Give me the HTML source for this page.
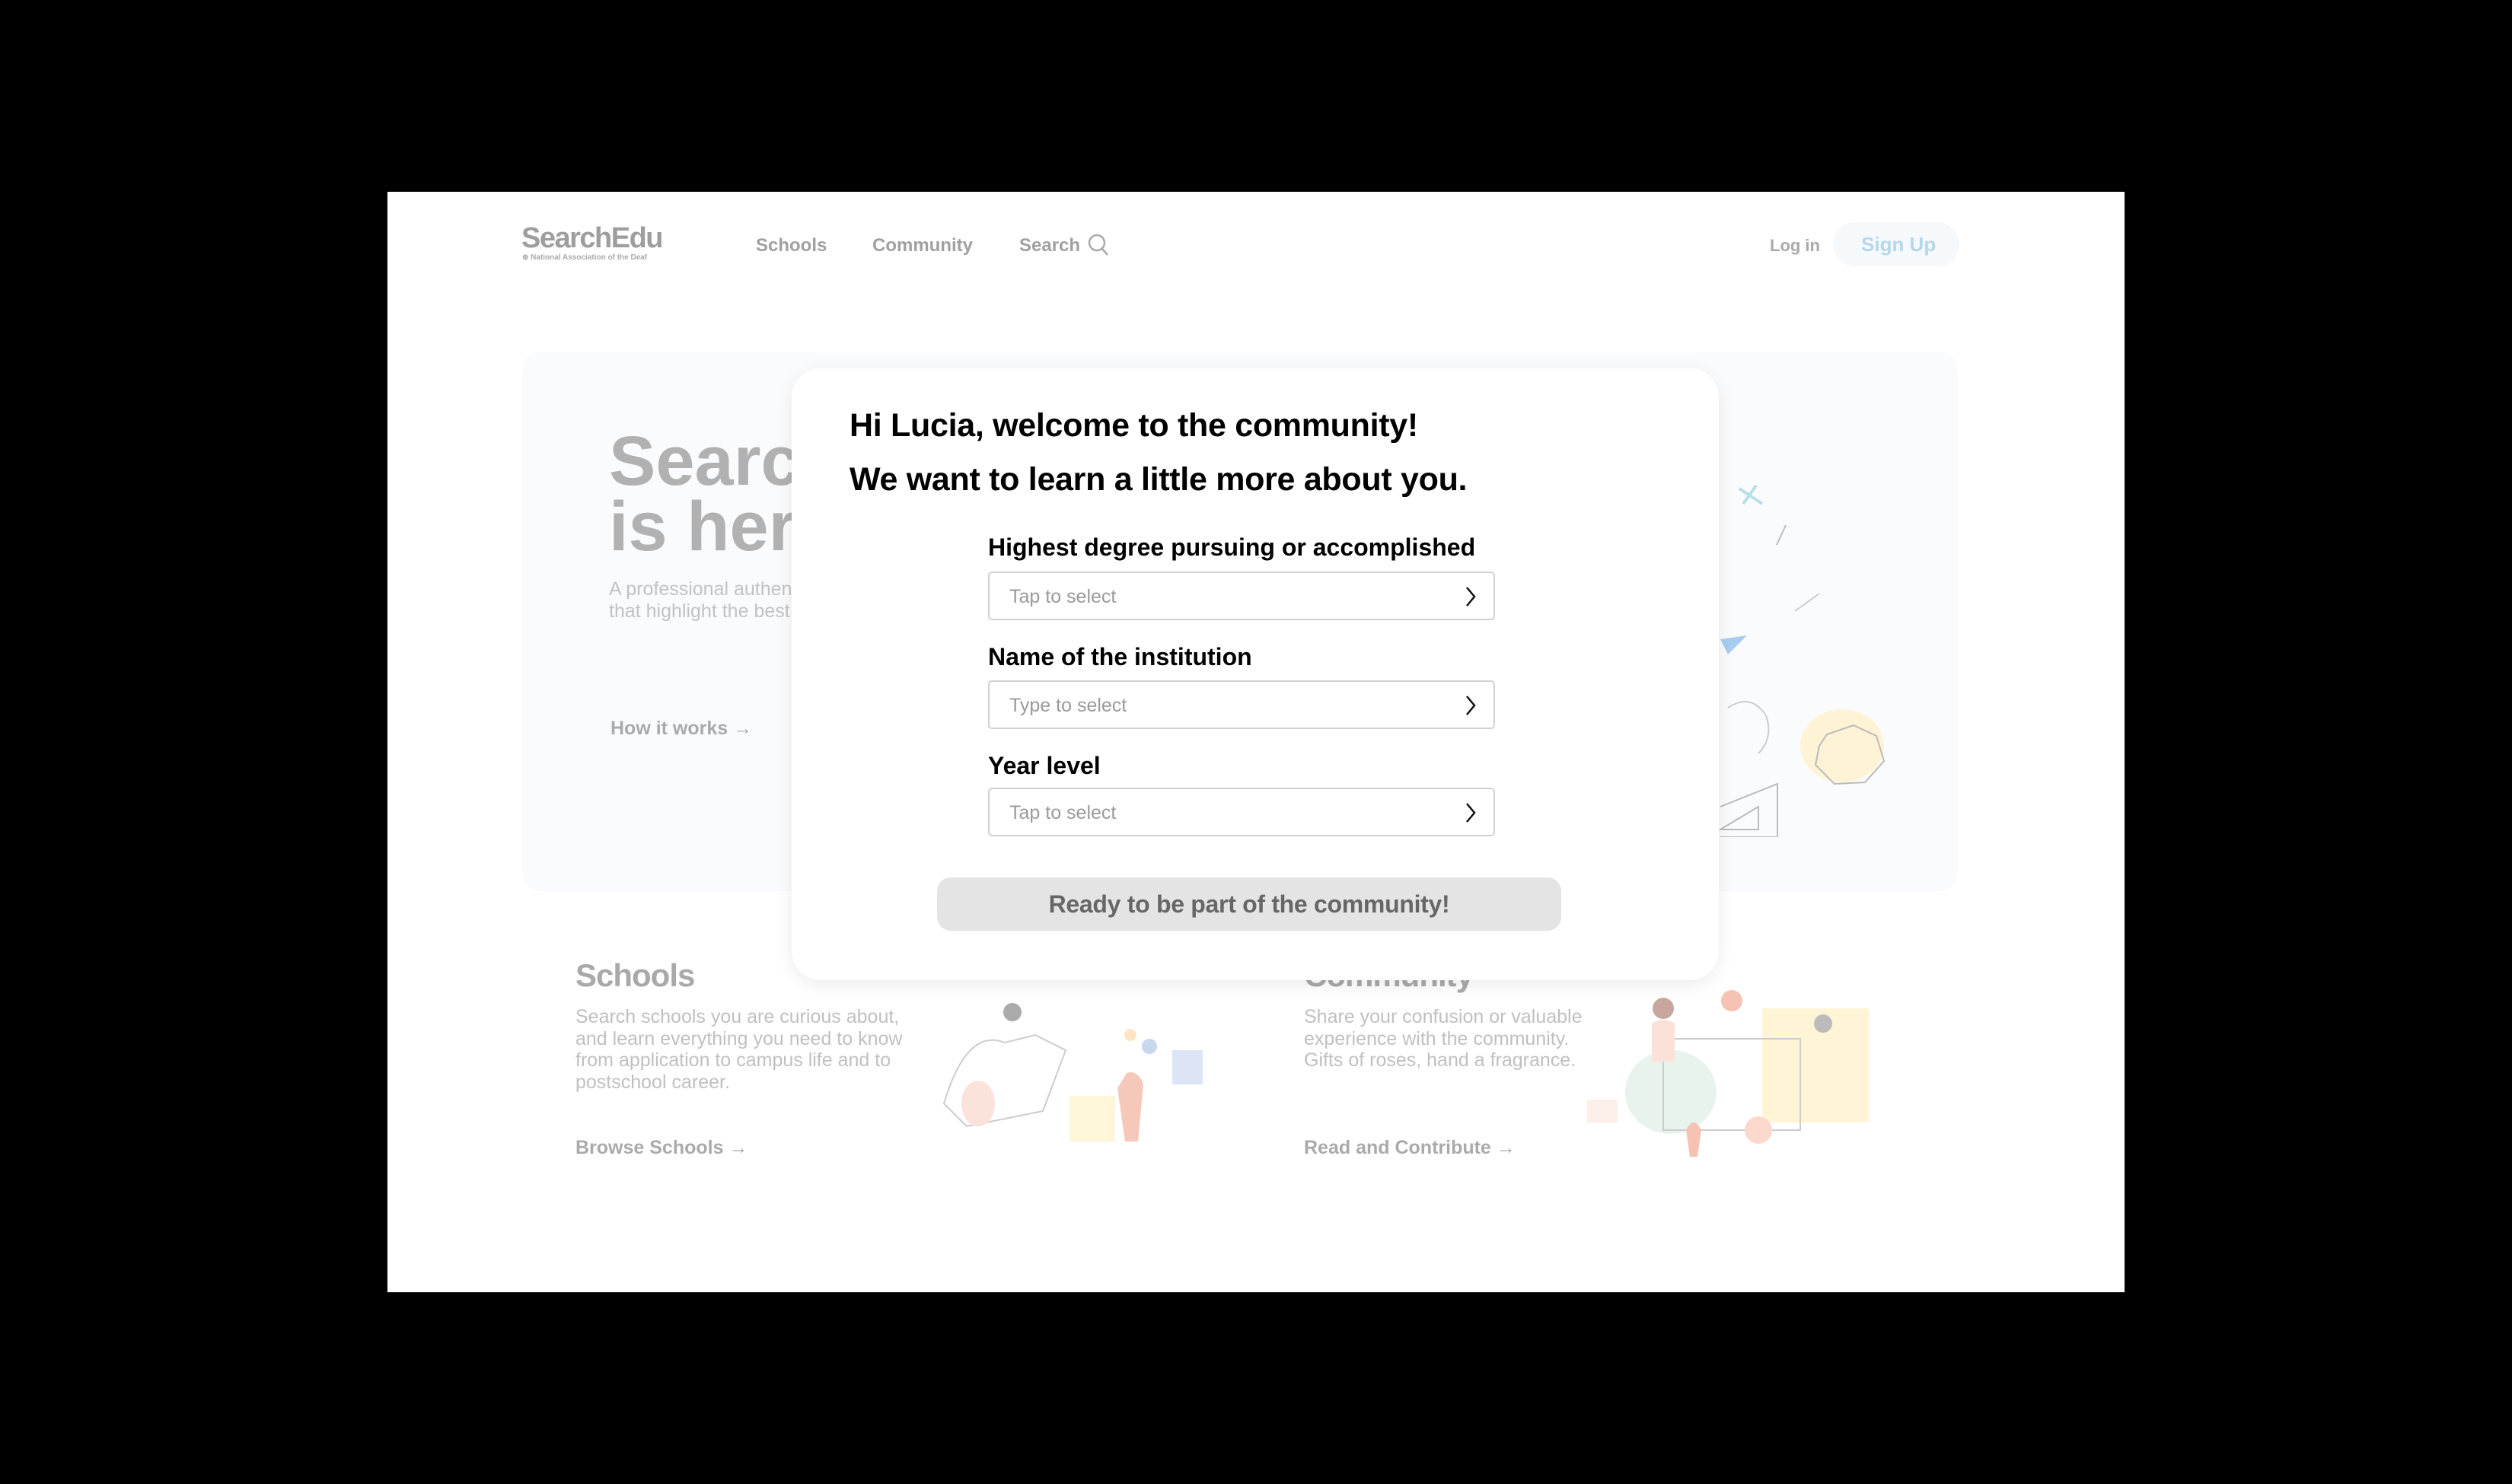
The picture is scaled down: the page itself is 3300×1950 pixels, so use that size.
<!DOCTYPE html>
<html><head><meta charset="utf-8"><style>
*{margin:0;padding:0;box-sizing:border-box}
body{width:3300px;height:1950px;background:#000;position:relative;overflow:hidden;font-family:"Liberation Sans",Arial,sans-serif}
.a{position:absolute;white-space:nowrap}
#panel{position:absolute;left:509px;top:252px;width:2282px;height:1446px;background:#fff;overflow:hidden}
.g{color:#a0a0a0;font-weight:bold}
.inp{position:absolute;left:1298px;width:666px;height:64px;border:2px solid #d2d2d2;border-radius:5px;background:#fff}
.inp span{position:absolute;left:26px;top:17px;font-size:25px;color:#9a9a9a}
.inp svg{position:absolute;right:20px;top:16px}
.lab{position:absolute;left:1298px;font-size:32px;font-weight:bold;color:#000}
</style></head><body>
<div id="panel"></div>
<!-- header -->
<div class="a" style="left:685px;top:292px;font-size:38px;font-weight:bold;color:#9e9e9e;letter-spacing:-1.5px">SearchEdu</div>
<div class="a" style="left:686px;top:333px;font-size:10px;font-weight:bold;color:#aaa">⊕ National Association of the Deaf</div>
<div class="a g" style="left:993px;top:309px;font-size:24px">Schools</div>
<div class="a g" style="left:1146px;top:309px;font-size:24px">Community</div>
<div class="a g" style="left:1339px;top:309px;font-size:24px">Search</div>
<svg class="a" style="left:1428px;top:306px" width="30" height="32" viewBox="0 0 30 32"><circle cx="13" cy="13" r="10" fill="none" stroke="#aaa" stroke-width="2.5"/><line x1="20" y1="21" x2="27" y2="29" stroke="#aaa" stroke-width="2.5"/></svg>
<div class="a" style="left:2325px;top:310px;font-size:22px;font-weight:bold;color:#a9a9a9">Log in</div>
<div class="a" style="left:2408px;top:292px;width:166px;height:58px;border-radius:29px;background:#f5f9fc"></div>
<div class="a" style="left:2445px;top:306px;font-size:26px;font-weight:bold;color:#b5d7ec">Sign Up</div>
<!-- hero -->
<div class="a" style="left:686px;top:463px;width:1886px;height:708px;background:#fafbfd;border-radius:24px"></div>
<div class="a" style="left:800px;top:563px;font-size:92px;font-weight:bold;color:#b1b1b1;line-height:86px">Search<br>is here</div>
<div class="a" style="left:800px;top:760px;font-size:25px;color:#c2c2c2;line-height:29px">A professional authentic<br>that highlight the best</div>
<div class="a" style="left:802px;top:943px;font-size:25px;font-weight:bold;color:#aaa">How it works →</div>
<svg class="a" style="left:2250px;top:620px" width="300" height="480" viewBox="0 0 300 480">
<line x1="35" y1="22" x2="65" y2="42" stroke="#b9dfe6" stroke-width="4"/><line x1="40" y1="42" x2="57" y2="18" stroke="#b9dfe6" stroke-width="4"/>
<line x1="84" y1="96" x2="96" y2="70" stroke="#bbb" stroke-width="2"/><line x1="108" y1="183" x2="140" y2="160" stroke="#ccc" stroke-width="2"/>
<path d="M10 220 L45 215 L20 240 Z" fill="#a8cdef"/>
<ellipse cx="170" cy="360" rx="55" ry="48" fill="#fff3d6"/>
<path d="M150 345 L185 333 L215 347 L225 380 L200 408 L160 410 L135 385 L140 360 Z" fill="none" stroke="#bbb" stroke-width="2"/>
<path d="M10 470 L60 440 L60 470 Z M10 440 L85 410 L85 480 L10 480" fill="none" stroke="#bbb" stroke-width="2"/>
<path d="M20 310 Q50 290 70 320 Q80 350 60 370" fill="none" stroke="#ccc" stroke-width="2"/>
</svg>
<!-- bottom -->
<div class="a" style="left:756px;top:1258px;font-size:42px;font-weight:bold;color:#a9a9a9;letter-spacing:-1px">Schools</div>
<div class="a" style="left:756px;top:1322px;font-size:25px;color:#c0c0c0;line-height:28.5px">Search schools you are curious about,<br>and learn everything you need to know<br>from application to campus life and to<br>postschool career.</div>
<div class="a" style="left:756px;top:1494px;font-size:25px;font-weight:bold;color:#aaa">Browse Schools →</div>
<div class="a" style="left:1713px;top:1258px;font-size:42px;font-weight:bold;color:#a9a9a9;letter-spacing:-1px">Community</div>
<div class="a" style="left:1713px;top:1322px;font-size:25px;color:#c0c0c0;line-height:28.5px">Share your confusion or valuable<br>experience with the community.<br>Gifts of roses, hand a fragrance.</div>
<div class="a" style="left:1713px;top:1494px;font-size:25px;font-weight:bold;color:#aaa">Read and Contribute →</div>
<svg class="a" style="left:1210px;top:1290px" width="390" height="225" viewBox="0 0 390 225">
<path d="M30 160 Q60 60 110 80 L150 70 L190 90 L160 170 L60 190 Z" fill="none" stroke="#ccc" stroke-width="2"/>
<ellipse cx="75" cy="160" rx="22" ry="30" fill="#fbe2da"/>
<path d="M270 120 Q285 115 292 135 L285 210 L268 210 L258 140 Z" fill="#f6c8ba"/>
<rect x="330" y="90" width="40" height="45" fill="#dbe5f5"/>
<circle cx="300" cy="85" r="10" fill="#c9d7ee"/><circle cx="275" cy="70" r="8" fill="#fde4c4"/>
<rect x="195" y="150" width="60" height="60" fill="#fff6da"/>
<circle cx="120" cy="40" r="12" fill="#555" opacity=".5"/>
</svg>
<svg class="a" style="left:2075px;top:1285px" width="460" height="240" viewBox="0 0 460 240">
<rect x="240" y="40" width="140" height="150" fill="#fff5d6"/>
<ellipse cx="120" cy="150" rx="60" ry="55" fill="#e9f3ee"/>
<rect x="110" y="80" width="180" height="120" fill="none" stroke="#ccc" stroke-width="2"/>
<circle cx="110" cy="40" r="14" fill="#c8a6a0"/><path d="M95 60 Q110 50 125 60 L125 110 L95 110 Z" fill="#fbe1d8"/>
<circle cx="320" cy="60" r="12" fill="#bbb"/><circle cx="200" cy="30" r="14" fill="#f5c2b3"/>
<path d="M140 200 Q150 180 160 200 L155 235 L145 235 Z" fill="#f5c2b3"/>
<circle cx="235" cy="200" r="18" fill="#fcd9cc"/>
<rect x="10" y="160" width="40" height="30" fill="#fdf0ea"/>
</svg>
<!-- modal -->
<div class="a" style="left:1040px;top:484px;width:1218px;height:804px;background:#fff;border-radius:38px;box-shadow:0 6px 24px rgba(0,0,0,.08)"></div>
<div class="a" style="left:1116px;top:535px;font-size:43px;font-weight:bold;color:#000;letter-spacing:-0.3px">Hi Lucia, welcome to the community!</div>
<div class="a" style="left:1116px;top:606px;font-size:43px;font-weight:bold;color:#000;letter-spacing:-0.3px">We want to learn a little more about you.</div>
<div class="lab" style="top:701px">Highest degree pursuing or accomplished</div>
<div class="inp" style="top:751px"><span>Tap to select</span><svg width="20" height="30" viewBox="0 0 20 30"><path d="M5 3 L15 15 L5 27" fill="none" stroke="#111" stroke-width="2.5"/></svg></div>
<div class="lab" style="top:845px">Name of the institution</div>
<div class="inp" style="top:894px"><span>Type to select</span><svg width="20" height="30" viewBox="0 0 20 30"><path d="M5 3 L15 15 L5 27" fill="none" stroke="#111" stroke-width="2.5"/></svg></div>
<div class="lab" style="top:988px">Year level</div>
<div class="inp" style="top:1035px"><span>Tap to select</span><svg width="20" height="30" viewBox="0 0 20 30"><path d="M5 3 L15 15 L5 27" fill="none" stroke="#111" stroke-width="2.5"/></svg></div>
<div class="a" style="left:1231px;top:1153px;width:820px;height:70px;background:#e4e4e4;border-radius:18px;text-align:center;line-height:70px;font-size:32px;font-weight:bold;color:#666;letter-spacing:-0.3px">Ready to be part of the community!</div>
</body></html>
